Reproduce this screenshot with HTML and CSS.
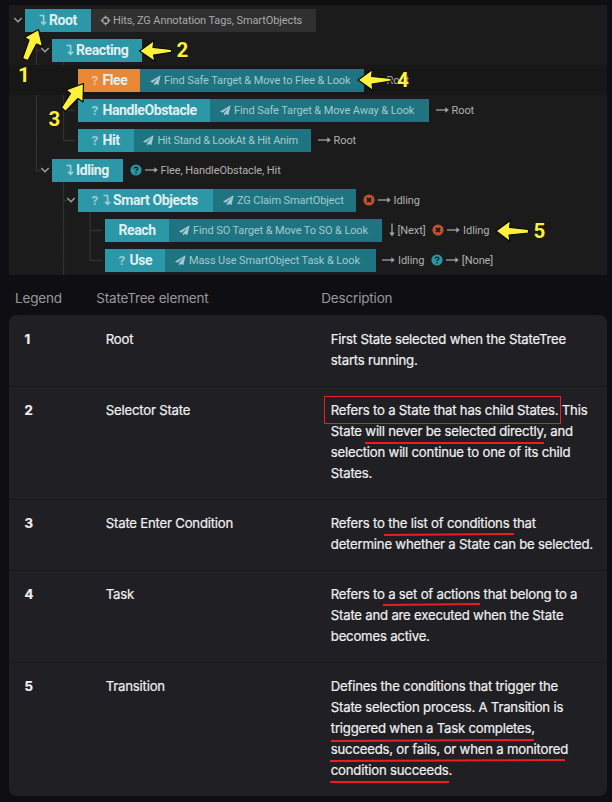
FILE: index.html
```html
<!DOCTYPE html>
<html lang="en">
<head>
<meta charset="utf-8">
<title>StateTree legend</title>
<link rel="stylesheet" href="styles.css">
</head>
<body>
<svg class="defs" width="0" height="0" aria-hidden="true">
  <symbol id="chev" viewBox="0 0 10 8"><path d="M1.3 2 5 5.8 8.7 2" fill="none" stroke="#a0a0a0" stroke-width="1.4"/></symbol>
  <symbol id="sel" viewBox="0 0 8 12"><path d="M.5 1.500H4.600V10M2 7.800 4.600 10.400 7.200 7.800" fill="none" stroke="currentColor" stroke-width="1.6"/></symbol>
  <symbol id="plane" viewBox="0 0 12 12"><path d="M11.6.4 0 7.1 2.9 8.4 9.6 2.7 4.3 9V11.8L6.1 9.7 9.2 11Z" fill="currentColor"/></symbol>
  <symbol id="target" viewBox="0 0 12 12"><circle cx="6" cy="6" r="3.4" fill="none" stroke="currentColor" stroke-width="1.2"/><path d="M6 .8V4M6 8v3.2M.8 6H4M8 6h3.2" stroke="currentColor" stroke-width="1.5"/></symbol>
  <symbol id="arrow" viewBox="0 0 13 8"><path d="M0 4H11" stroke="#a3a3a3" stroke-width="1.3"/><path d="M9.3 1.3 12.8 4 9.3 6.7Z" fill="#a3a3a3"/></symbol>
  <symbol id="down" viewBox="0 0 6 14"><path d="M3 .5V11" stroke="#a3a3a3" stroke-width="1.3"/><path d="M.3 9.5 3 13.4 5.7 9.5Z" fill="#a3a3a3"/></symbol>
  <symbol id="fail" viewBox="0 0 12 12"><circle cx="6" cy="6" r="5.6" fill="#c1502f"/><path d="M4 4 8 8M8 4 4 8" stroke="#1b1b1b" stroke-width="1.8"/></symbol>
  <symbol id="cond" viewBox="0 0 12 12"><circle cx="6" cy="6" r="5.6" fill="#2a96a5"/><path d="M4.2 4.7C4.3 2.5 7.9 2.7 7.7 4.7 7.6 5.8 6 5.8 6 7.3M6 8.2V9.6" fill="none" stroke="#1b1b1b" stroke-width="1.4"/></symbol>
</svg>

<section class="tree">
  <svg class="guides" width="598" height="270" viewBox="9 5 598 270">
    <path d="M36.5 32V170.500H41M63.500 62V140.500H75M63.500 80.500H75M63.500 110.500H75M36.500 50.500H41M63.500 182V275M63.500 200.500H67M90 212V260.500H102M90 230.500H102" fill="none" stroke="#303030" stroke-width="1.3"/>
  </svg>

  <div class="row d0"><svg class="chev"><use href="#chev"/></svg>
    <div class="state w-root"><svg class="sel"><use href="#sel"/></svg><b>Root</b></div>
    <div class="task plain w-root-task"><svg class="ic"><use href="#target"/></svg><span>Hits, ZG Annotation Tags, SmartObjects</span></div></div>

  <div class="row d1"><svg class="chev"><use href="#chev"/></svg>
    <div class="state w-react"><svg class="sel"><use href="#sel"/></svg><b>Reacting</b></div></div>

  <div class="row d2 active"><i class="chev"></i>
    <div class="state orange w-flee"><em>?</em><b>Flee</b></div>
    <div class="task w-flee-task"><svg class="ic"><use href="#plane"/></svg><span>Find Safe Target &amp; Move to Flee &amp; Look</span></div>
    <div class="next"><svg class="arrow"><use href="#arrow"/></svg><span>Root</span></div></div>

  <div class="row d2"><i class="chev"></i>
    <div class="state w-handle"><em>?</em><b>HandleObstacle</b></div>
    <div class="task w-handle-task"><svg class="ic"><use href="#plane"/></svg><span>Find Safe Target &amp; Move Away &amp; Look</span></div>
    <div class="next"><svg class="arrow"><use href="#arrow"/></svg><span>Root</span></div></div>

  <div class="row d2"><i class="chev"></i>
    <div class="state w-hit"><em>?</em><b>Hit</b></div>
    <div class="task w-hit-task"><svg class="ic"><use href="#plane"/></svg><span>Hit Stand &amp; LookAt &amp; Hit Anim</span></div>
    <div class="next"><svg class="arrow"><use href="#arrow"/></svg><span>Root</span></div></div>

  <div class="row d1"><svg class="chev"><use href="#chev"/></svg>
    <div class="state w-idle"><svg class="sel"><use href="#sel"/></svg><b>Idling</b></div>
    <div class="next"><svg class="dot"><use href="#cond"/></svg><svg class="arrow"><use href="#arrow"/></svg><span>Flee, HandleObstacle, Hit</span></div></div>

  <div class="row d2"><svg class="chev"><use href="#chev"/></svg>
    <div class="state w-smart"><em>?</em><svg class="sel"><use href="#sel"/></svg><b>Smart Objects</b></div>
    <div class="task w-smart-task"><svg class="ic"><use href="#plane"/></svg><span>ZG Claim SmartObject</span></div>
    <div class="next"><svg class="dot"><use href="#fail"/></svg><svg class="arrow"><use href="#arrow"/></svg><span>Idling</span></div></div>

  <div class="row d3"><i class="chev"></i>
    <div class="state w-reach"><b>Reach</b></div>
    <div class="task w-reach-task"><svg class="ic"><use href="#plane"/></svg><span>Find SO Target &amp; Move To SO &amp; Look</span></div>
    <div class="next"><svg class="down"><use href="#down"/></svg><span>[Next]</span></div>
    <div class="next"><svg class="dot"><use href="#fail"/></svg><svg class="arrow"><use href="#arrow"/></svg><span>Idling</span></div></div>

  <div class="row d3"><i class="chev"></i>
    <div class="state w-use"><em>?</em><b>Use</b></div>
    <div class="task w-use-task"><svg class="ic"><use href="#plane"/></svg><span>Mass Use SmartObject Task &amp; Look</span></div>
    <div class="next"><svg class="arrow"><use href="#arrow"/></svg><span>Idling</span></div>
    <div class="next"><svg class="dot"><use href="#cond"/></svg><svg class="arrow"><use href="#arrow"/></svg><span>[None]</span></div></div>
</section>

<section class="legend">
  <div class="cols head"><span>Legend</span><span>StateTree element</span><span>Description</span></div>
  <div class="body">
    <div class="cols item"><b>1</b><span>Root</span><p>First State selected when the StateTree<br>starts running.</p></div>
    <div class="cols item"><b>2</b><span>Selector State</span><p>Refers to a State that has child States. This<br>State will never be selected directly, and<br>selection will continue to one of its child<br>States.</p></div>
    <div class="cols item"><b>3</b><span>State Enter Condition</span><p>Refers to the list of conditions that<br>determine whether a State can be selected.</p></div>
    <div class="cols item"><b>4</b><span>Task</span><p>Refers to a set of actions that belong to a<br>State and are executed when the State<br>becomes active.</p></div>
    <div class="cols item"><b>5</b><span>Transition</span><p>Defines the conditions that trigger the<br>State selection process. A Transition is<br>triggered when a Task completes,<br>succeeds, or fails, or when a monitored<br>condition succeeds.</p></div>
  </div>
</section>

<svg class="notes" width="612" height="802" viewBox="0 0 612 802">
  <g fill="#fff13a" stroke="#090909" stroke-width="1.2" stroke-linejoin="round">
    <path d="M38.500 29.500 24.500 37.500 29 40 22.500 58.500 28 60.500 36.500 44 42.500 46.500Z"/>
    <path d="M139.500 51 154 40.500 153 47.300 171.500 49.500V52.300L153.500 55 155 61.500Z"/>
    <path d="M83.500 83.500 66 90 70.500 93.500 61.500 107.500 65.500 111.500 78 98.500 83 102Z"/>
    <path d="M358 80 372.500 69.500 371.500 76.500 391 78.500V81.200L372 84 373 90.500Z"/>
    <path d="M496 231 510.500 220.500 509.500 227.300 528.500 229.500V233L509 235 510 241.500Z"/>
  </g>
  <g class="nums">
    <text x="18" y="82">1</text><text x="176.500" y="56.500">2</text><text x="48.500" y="125.500">3</text><text x="397" y="87">4</text><text x="533.500" y="238">5</text>
  </g>
  <g fill="none" stroke="#ec1c24">
    <rect x="324.500" y="396.500" width="236" height="27"/>
    <path stroke-width="2" d="M365 443H544M384 535 514 534M383 605 480 604M331 741 534 740M330 761 565 760M330 782H449"/>
  </g>
</svg>
</body>
</html>
```

FILE: styles.css
```css
* { box-sizing: border-box; }
body {
  margin: 0;
  width: 612px;
  height: 802px;
  padding: 5px 5px 0 9px;
  overflow: hidden;
  position: relative;
  background: #0f0e13;
  font-family: Roboto, "Liberation Sans", sans-serif;
}
svg { display: block; flex: none; }
.defs { position: absolute; }

.tree {
  position: relative;
  height: 270px;
  background: #1b1b1b;
}
.guides { position: absolute; left: 0; top: 0; }
.row {
  position: relative;
  display: flex;
  align-items: center;
  height: 30px;
}
.row.active { background: #171717; }
.chev { width: 10px; height: 8px; margin-right: 2px; }
.d0 { padding-left: 4px; }
.d1 { padding-left: 31px; }
.d2 { padding-left: 57px; }
.d3 { padding-left: 84px; }

.state, .task {
  display: flex;
  align-items: center;
  flex: none;
  height: 23px;
  white-space: nowrap;
}
.state {
  padding-left: 13.500px;
  background: #2c97a7;
  color: #e0eff1;
  font-size: 14px;
  letter-spacing: -.4px;
}
.state.orange { background: #e88735; }
.state b { font-weight: 700; }
.state em {
  width: 11px;
  font-style: normal;
  font-weight: 700;
  font-size: 13.500px;
  color: rgba(255, 255, 255, .5);
}
.sel { width: 8px; height: 12px; margin-right: 2.500px; color: rgba(255, 255, 255, .55); }
.task {
  padding-left: 9.500px;
  background: #1e7480;
  color: #a3c9ce;
  font-size: 11px;
  letter-spacing: -.11px;
}
.task.plain { padding-left: 9px; background: #303030; color: #a9a9a9; }
.ic { width: 11px; height: 11px; margin-right: 3.500px; }
.plain .ic { margin-right: 2px; }

.w-root { width: 66px; }
.w-root-task { width: 225px; }
.w-react { width: 90px; }
.w-flee { width: 62px; }
.w-flee-task { width: 224px; }
.w-handle { width: 132px; }
.w-handle-task { width: 219px; }
.w-hit { width: 55.500px; }
.w-hit-task { width: 177.500px; letter-spacing: -.23px; }
.w-idle { width: 71px; }
.w-smart { width: 135px; }
.w-smart-task { width: 143px; }
.w-reach { width: 64px; }
.w-reach-task { width: 213px; }
.w-use { width: 60px; }
.w-use-task { width: 210.500px; }

.next {
  display: flex;
  align-items: center;
  gap: 3px;
  margin-left: 6.500px;
  font-size: 11px;
  letter-spacing: -.08px;
  color: #b0b0b0;
  white-space: nowrap;
}
.arrow { width: 13px; height: 8px; }
.dot { width: 12px; height: 12px; }
.down { width: 6px; height: 14px; }

.legend {
  font-family: Inter, "Liberation Sans", sans-serif;
  font-size: 13.200px;
  letter-spacing: -.22px;
}
.cols { display: grid; grid-template-columns: 81.300px 225px 1fr; }
.head {
  height: 40px;
  padding: 5px 0 0 6px;
  align-items: center;
  color: #98989a;
  font-size: 13.500px;
  letter-spacing: -.18px;
}
.body {
  width: 598px;
  border-radius: 8px;
  background: #202024;
  overflow: hidden;
}
.item {
  padding: 14px 0 15px 15.500px;
  line-height: 21px;
  color: #f0f0f1;
  -webkit-text-stroke: .2px #f0f0f1;
}
.item + .item { padding-top: 13px; border-top: 1px solid #18181b; }
.item p { margin: 0; white-space: nowrap; }

.notes { position: absolute; left: 0; top: 0; }
.nums {
  fill: #fff13a;
  stroke: #111;
  stroke-width: .5;
  paint-order: stroke;
  font: 700 20.500px Roboto, sans-serif;
}
```
